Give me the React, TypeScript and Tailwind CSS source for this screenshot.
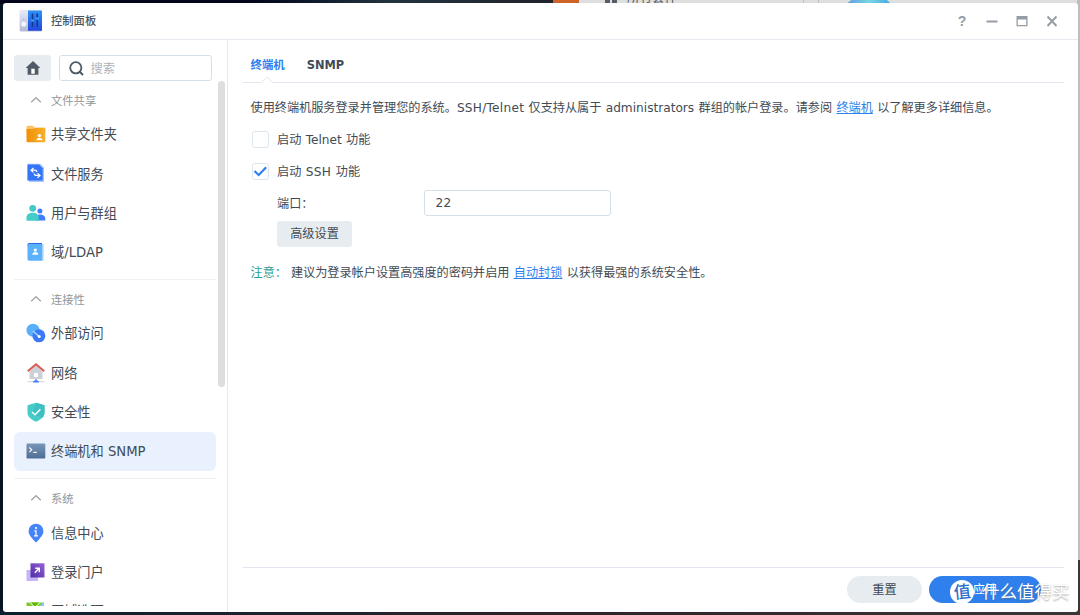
import type { ReactNode } from 'react'

type NavItem = { label: string; icon: ReactNode; active?: boolean }
type NavGroup = { title: string; items: NavItem[] }

const groups: NavGroup[] = [
  {
    title: '文件共享',
    items: [
      { label: '共享文件夹', icon: <FolderIcon /> },
      { label: '文件服务', icon: <FileServiceIcon /> },
      { label: '用户与群组', icon: <UsersIcon /> },
      { label: '域/LDAP', icon: <LdapIcon /> },
    ],
  },
  {
    title: '连接性',
    items: [
      { label: '外部访问', icon: <ExternalIcon /> },
      { label: '网络', icon: <NetworkIcon /> },
      { label: '安全性', icon: <ShieldIcon /> },
      { label: '终端机和 SNMP', icon: <TerminalIcon />, active: true },
    ],
  },
  {
    title: '系统',
    items: [
      { label: '信息中心', icon: <InfoIcon /> },
      { label: '登录门户', icon: <PortalIcon /> },
      { label: '区域选项', icon: <RegionIcon /> },
    ],
  },
]

function FolderIcon() {
  return (
    <svg width="20" height="20" viewBox="0 0 20 20">
      <path d="M.5 3.2a1.4 1.4 0 0 1 1.4-1.4h5l1.5 1.6h9.7a1.2 1.2 0 0 1 1.2 1.2V8H.5z" fill="#fdc263" />
      <path d="M.5 5h6.8l1.6-1h9.3a1.1 1.1 0 0 1 1.1 1.1v12.1a1.1 1.1 0 0 1-1.1 1.1H1.6a1.1 1.1 0 0 1-1.1-1.1z" fill="url(#folder)" />
      <circle cx="13.4" cy="11.6" r="1.7" fill="#fff" />
      <path d="M10.4 16.3c0-1.8 1.3-2.6 3-2.6s3 .8 3 2.6z" fill="#fff" />
      <defs>
        <linearGradient id="folder">
          <stop stopColor="#f08f08" />
          <stop offset="1" stopColor="#fab02c" />
        </linearGradient>
      </defs>
    </svg>
  )
}

function FileServiceIcon() {
  return (
    <svg width="20" height="20" viewBox="0 0 20 20">
      <path d="M1.5.8h12.8L18 4.5V19H3v-1.5H1.5z" fill="#a9c4fd" />
      <path d="M1.500 1.500H13l3.700 3.700v12.300H1.500z" fill="#3374f8" />
      <path d="M7.500 5 5 7.200l2.500 2.200M5.300 7.200h3.400q2 0 2 1.800M11.500 10.200l2.500 2.200-2.500 2.300M13.700 12.400h-3.400q-2 0-2-1.800" fill="none" stroke="#fff" strokeWidth="1.200" />
    </svg>
  )
}

function UsersIcon() {
  return (
    <svg width="20" height="20" viewBox="0 0 20 20">
      <circle cx="13.9" cy="8" r="2.5" fill="#3f7dfb" />
      <path d="M10 17.6v-3c0-2 1.8-3 4-3 3 0 5.3 1.5 5.3 4.5v1.5z" fill="#3f7dfb" />
      <circle cx="6.7" cy="5.3" r="3.4" fill="#45c8c7" />
      <path d="M.5 17.8v-3.3c0-3.3 2.7-4.8 6.2-4.8s6.1 1.5 6.1 4.8v3.3z" fill="#45ccc8" />
    </svg>
  )
}

function LdapIcon() {
  return (
    <svg width="20" height="20" viewBox="0 0 20 20">
      <path d="M1.5 2.5Q1.5 1 3 1h13v3H1.5z" fill="#3267e8" />
      <path d="M3 2h13.5v16.8H2.8L1.5 17.5V3z" fill="#5bb2fc" />
      <path d="M16 2h1.5v16.800H16z" fill="#9fd2fe" />
      <circle cx="9.3" cy="8" r="1.6" fill="#fff" />
      <path d="M6.3 12.8c0-2 1.3-2.8 3-2.8s3 .8 3 2.8z" fill="#fff" />
    </svg>
  )
}

function ExternalIcon() {
  return (
    <svg width="20" height="20" viewBox="0 0 20 20">
      <circle cx="7" cy="7.2" r="6.5" fill="#58b0fb" />
      <circle cx="12.9" cy="12.8" r="6.5" fill="#3c79f9" />
      <path d="m7 8 5.5 5" stroke="#b6ddff" strokeWidth="1.3" />
      <circle cx="13.2" cy="13.6" r="1.5" fill="#fff" />
    </svg>
  )
}

function NetworkIcon() {
  return (
    <svg width="20" height="20" viewBox="0 0 20 20">
      <path d="M10 2.5 3.5 8.5V16h13V8.5z" fill="#cdd1d7" />
      <path d="M8 10h4v4H8z" fill="#fff" />
      <path d="m1.8 8.3 8.2-7 8.2 7" fill="none" stroke="#d95a52" strokeWidth="2" />
      <path d="M1.5 18.7h17" stroke="#cfd4dc" strokeWidth="1" />
      <path d="M10 16v2" stroke="#3f7dfb" strokeWidth="1.2" />
      <path d="M7 19.5c0-3 6-3 6 0z" fill="#3f7dfb" />
    </svg>
  )
}

function ShieldIcon() {
  return (
    <svg width="20" height="20" viewBox="0 0 20 20">
      <path d="M10 .7 18.5 3.3v7.2c0 4.6-4.5 7.5-8.5 9.2-4-1.7-8.5-4.6-8.5-9.2V3.3z" fill="#46cbc8" />
      <path d="M10 .7 18.5 3.3v7.2c0 2-.8 3.7-2 5.2L6 12z" fill="#3fbfc4" />
      <path d="m6 10 3 2.8 5.4-5.5" fill="none" stroke="#fff" strokeWidth="1.4" />
    </svg>
  )
}

function TerminalIcon() {
  return (
    <svg width="20" height="20" viewBox="0 0 20 20">
      <rect x=".5" y="2.6" width="18.8" height="15" rx=".8" fill="url(#term)" />
      <path d="m3.300 6.500 2.500 2.300-2.500 2.300M7.300 11.400h3.500" fill="none" stroke="#fff" strokeWidth="1.1" />
      <defs>
        <linearGradient id="term" x2="0" y2="1">
          <stop stopColor="#7896b8" />
          <stop offset="1" stopColor="#4d6d92" />
        </linearGradient>
      </defs>
    </svg>
  )
}

function InfoIcon() {
  return (
    <svg width="20" height="20" viewBox="0 0 20 20">
      <path d="M10 .7a7.4 7.4 0 0 1 7.4 7.4c0 4-2.6 6-4.4 8.3L10 19.6l-3-3.2C5.2 14 2.6 12 2.6 8.1A7.4 7.4 0 0 1 10 .7" fill="#4583fa" />
      <circle cx="10" cy="5.1" r="1.1" fill="#fff" />
      <path d="M8.3 7.8H10v5M8 12.9h4" fill="none" stroke="#fff" strokeWidth="1.2" />
    </svg>
  )
}

function PortalIcon() {
  return (
    <svg width="20" height="20" viewBox="0 0 20 20">
      <path d="M.5 8H12v11H.5z" fill="#c7b3f8" />
      <path d="M4.5 1.3h14v14.2h-14z" fill="url(#portal)" />
      <path d="M9.3 6.3h4v4M13 6.6 8.800 10.700" fill="none" stroke="#fff" strokeWidth="1.4" />
      <defs>
        <linearGradient id="portal" x1="0" y1="1" x2="1" y2="0">
          <stop stopColor="#4b2fa8" />
          <stop offset="1" stopColor="#9c5fd6" />
        </linearGradient>
      </defs>
    </svg>
  )
}

function RegionIcon() {
  return (
    <svg width="20" height="20" viewBox="0 0 20 20">
      <path d="M.5 1.500h17v17H.5z" fill="#7ccb22" />
      <path d="m5 1.500 4 4 4-4z" fill="#5eb506" />
      <path d="m4 1.500 5 5 5-5" fill="none" stroke="#fff" strokeWidth="1" />
      <path d="M13 5.500 17 1.500h.8V6z" fill="#86c5fa" />
    </svg>
  )
}

function PanelIcon() {
  return (
    <svg width="24" height="22" viewBox="0 0 24 22" className="block">
      <rect x=".8" y=".5" width="22.2" height="21" rx="1.2" fill="#b9bfdb" />
      <path d="M.8 1.7Q.8.5 2 .5h7v20.2H.8z" fill="url(#leftPanel)" />
      <path d="M9 .5h13q1 0 1 1v19.2H9z" fill="url(#rightPanel)" />
      <path d="M13.5 3.5V17M18.2 3.5V17" stroke="#103a94" strokeWidth="1.6" />
      <path d="M12.200 10.500h2.600M16.900 8.500h2.600" stroke="#42a6ff" strokeWidth="2" />
      <circle cx="4.8" cy="14" r="2.6" fill="#f3f4fd" />
      <circle cx="4.8" cy="9.5" r=".7" fill="#a4abc8" />
      <defs>
        <linearGradient id="leftPanel" x2="0" y2="1">
          <stop stopColor="#e8eafa" />
          <stop offset="1" stopColor="#b3b9d6" />
        </linearGradient>
        <linearGradient id="rightPanel" x2="0" y2="1">
          <stop stopColor="#2f92f2" />
          <stop offset="1" stopColor="#2348dc" />
        </linearGradient>
      </defs>
    </svg>
  )
}

function NavSection({ group, first }: { group: NavGroup; first: boolean }) {
  return (
    <section className={first ? 'pt-[3.5px]' : 'mt-[7px] border-t border-[#eff1f3] pt-[4px]'}>
      <div className="flex h-[30px] items-center pt-[5px] pl-[15.5px] text-[11.3px] text-[#90969c]">
        <svg width="12" height="8" viewBox="0 0 12 8" className="-mt-[4px] mr-[9.5px]">
          <path d="m1.2 6.3 4.8-4.6 4.8 4.6" fill="none" stroke="#a3a8ad" strokeWidth="1.4" />
        </svg>
        {group.title}
      </div>
      {group.items.map((item) => (
        <div
          key={item.label}
          className={`flex h-[39.3px] items-center rounded-md pl-[11.5px] text-[13.2px] text-[#414b55] ${item.active ? 'bg-[#e8f1fd]' : ''}`}
        >
          {item.icon}
          <span className="ml-[5.5px] pt-[2px]">{item.label}</span>
        </div>
      ))}
    </section>
  )
}

function Sidebar() {
  return (
    <aside className="flex w-[225px] shrink-0 flex-col border-r border-[#e3eaf1] pt-[15px]">
      <div className="flex h-[26px] shrink-0 gap-[8px] pl-[11px]">
        <button className="flex w-[37px] items-center justify-center rounded-[3px] bg-[#e7ecf1]">
          <svg width="16" height="14" viewBox="0 0 16 14">
            <path d="M8 0 .6 7h2v6.700H13.400V7h2z" fill="#505b67" />
            <path d="M6.300 7.800h3.400v5H6.300z" fill="#fff" />
          </svg>
        </button>
        <div className="flex w-[153px] items-center rounded-[3px] border border-[#d5dfe8] pl-[8.500px] text-[12.200px] text-[#adb3b9]">
          <svg width="15" height="15" viewBox="0 0 15 15" className="mr-[7px]">
            <circle cx="6.8" cy="6.8" r="5.6" fill="none" stroke="#4d5863" strokeWidth="1.8" />
            <path d="m10.500 10.500 3.500 3.500" stroke="#4d5863" strokeWidth="1.900" />
          </svg>
          <span className="pt-[2px]">搜索</span>
        </div>
      </div>
      <div className="flex h-[525px] overflow-hidden">
        <nav className="ml-[11px] w-[202px] shrink-0">
          {groups.map((group, i) => (
            <NavSection key={group.title} group={group} first={i === 0} />
          ))}
        </nav>
        <div className="ml-[2px] h-[306px] w-[7px] rounded-full bg-[#dedede]" />
      </div>
    </aside>
  )
}

function Checkbox({ checked, children }: { checked?: boolean; children: ReactNode }) {
  return (
    <label className="flex h-[32px] items-center gap-[8.5px]">
      <span className="ml-[1px] flex size-[17px] items-center justify-center rounded-[3px] border border-[#dce5ee]">
        {checked && (
          <svg width="15" height="13" viewBox="0 0 15 13" className="shrink-0">
            <path d="m1.500 6 4.200 4 7.500-7.700" fill="none" stroke="#2f80ed" strokeWidth="2.200" />
          </svg>
        )}
      </span>
      <span className="pt-[2px]">{children}</span>
    </label>
  )
}

function Content() {
  return (
    <main className="flex flex-1 flex-col pr-[14px] pl-[15px] text-[12.15px] text-[#414b55] [word-spacing:0.5px]">
      <div className="relative flex h-[43px] items-center gap-[22px] border-b border-[#dfe6ef] pt-[9px] pl-[7.5px] text-[11.4px] font-bold">
        <span className="text-[#2f80ed]">终端机</span>
        <span>SNMP</span>
        <svg width="12" height="7" viewBox="0 0 12 7" className="absolute -bottom-px left-[18px]">
          <path d="M0 6.500h1L6 1.200l5 5.300h1V7H0z" fill="#fff" />
          <path d="m.5 6.500 5.500-5.500 5.500 5.500" fill="none" stroke="#dfe6ef" />
        </svg>
      </div>
      <div className="flex-1 pt-[8px] pl-[7.5px]">
        <p className="h-[32px] pt-px leading-[32px] whitespace-nowrap">
          使用终端机服务登录并管理您的系统。<span className="tracking-[0.25px]">SSH/Telnet</span> 仅支持从属于 administrators 群组的帐户登录。请参阅{' '}
          <a className="text-[#2f80ed] underline">终端机</a> 以了解更多详细信息。
        </p>
        <Checkbox>启动 Telnet 功能</Checkbox>
        <Checkbox checked>
          启动 <span className="tracking-[0.4px]">SSH</span> 功能
        </Checkbox>
        <div className="flex h-[32px] items-center pl-[26.5px]">
          <span className="w-[147px] pt-[2px]">端口：</span>
          <span className="flex h-[26px] w-[187px] items-center rounded-[3px] border border-[#d5dfe8] pt-px pl-[10.5px] tracking-[0.3px]">22</span>
        </div>
        <button className="mt-[2px] ml-[26.5px] block h-[26px] w-[75px] rounded-[3px] bg-[#e7ecf1] pt-px">高级设置</button>
        <p className="mt-[10px] h-[32px] leading-[32px] whitespace-nowrap">
          <span className="mr-[4px] text-[#27a29c]">注意：</span>
          建议为登录帐户设置高强度的密码并启用 <a className="text-[#2f80ed] underline">自动封锁</a> 以获得最强的系统安全性。
        </p>
      </div>
      <footer className="flex h-[45px] shrink-0 justify-end gap-[7px] border-t border-[#e1e6ef] pt-[8px] pr-[23px]">
        <button className="h-[27px] w-[75px] rounded-full bg-[#e7ecf1] pt-[2px]">重置</button>
        <button className="h-[27px] w-[112px] rounded-full bg-[#2f80ed] pt-[2px] text-white">应用</button>
      </footer>
    </main>
  )
}

export default function App() {
  return (
    <div className="relative flex h-[615px] w-[1080px] overflow-hidden bg-[#071522] px-[3px] pt-[3px] pb-[3px] font-['DejaVu_Sans','Noto_Sans_CJK_SC',sans-serif]">
      {/* Desktop peeking out behind the window */}
      <div className="absolute top-0 left-0 flex h-[4px] w-full overflow-hidden bg-[#090c22]">
        <div className="w-[553px] bg-linear-to-r from-[#03051c] from-45% via-[#22343f] via-70% to-[#20222c]" />
        <div className="w-[26px] bg-[#cf6428]" />
        <div className="relative flex-1 bg-[#dedede]">
          <span className="absolute top-0 left-[26px] h-[3px] w-[5px] bg-[#555d66]" />
          <span className="absolute top-0 left-[33px] h-[3px] w-[5px] bg-[#555d66]" />
          <span className="absolute -top-[8px] left-[48px] text-[12.500px] leading-[12px] text-[#4b5560]">所有套件</span>
          <span className="absolute top-0 left-[224px] h-[3px] w-px bg-[#bfc3c6]" />
          <span className="absolute top-0 left-[239px] h-[3px] w-px bg-[#bfc3c6]" />
          <span className="absolute -top-[2px] left-[265px] h-[30px] w-[50px] rounded-full bg-linear-to-r from-[#5e94df] via-[#78d7e2] to-[#3d9ee4]" />
        </div>
      </div>
      <div className="absolute top-0 right-0 h-[560px] w-[3px] bg-[#bdbdbd]" />
      <div className="absolute right-0 bottom-0 h-[55px] w-[3px] bg-[#393638]" />
      <div className="absolute bottom-0 left-0 h-[4px] w-full bg-linear-to-r from-[#08202f] via-[#2e2328] to-[#393638]" />

      <div className="relative flex w-[1075px] shrink-0 flex-col overflow-hidden rounded-[3px] bg-white">
        <header className="flex h-[37px] shrink-0 items-center border-b border-[#e5ebf1] pr-[20px] pl-[16px]">
          <PanelIcon />
          <h1 className="ml-[8px] pt-[3px] text-[11.3px] font-medium text-[#4a545e]">控制面板</h1>
          <div className="ml-auto flex items-center gap-[18px] text-[#959ca6]">
            <span className="w-[12px] text-center text-[14px] leading-none font-bold font-['Liberation_Sans',sans-serif]">?</span>
            <svg width="12" height="12" viewBox="0 0 12 12">
              <path d="M.5 6.500h11" stroke="currentColor" strokeWidth="1.800" />
            </svg>
            <svg width="12" height="12" viewBox="0 0 12 12">
              <path d="M.5 1h11v10.200H.5zM1.800 4.600v5.300h8.400V4.600z" fill="currentColor" fillRule="evenodd" />
            </svg>
            <svg width="12" height="12" viewBox="0 0 12 12">
              <path d="m1.500 1.500 9 9.500m0-9.500-9 9.500" stroke="currentColor" strokeWidth="1.900" />
            </svg>
          </div>
        </header>
        <div className="flex min-h-0 flex-1">
          <Sidebar />
          <Content />
        </div>
      </div>

      {/* Watermark over the footer */}
      <div className="absolute top-[580px] left-[950px] flex items-center">
        <span className="flex size-[24px] items-center justify-center rounded-full bg-white text-[17px] leading-none font-medium text-[#2e70c9]">
          <span className="-rotate-6">值</span>
        </span>
        <span className="ml-[8px] pt-px text-[17.500px] leading-none whitespace-nowrap text-white [text-shadow:0_1px_2px_rgba(90,90,90,0.6)]">什么值得买</span>
      </div>
    </div>
  )
}
